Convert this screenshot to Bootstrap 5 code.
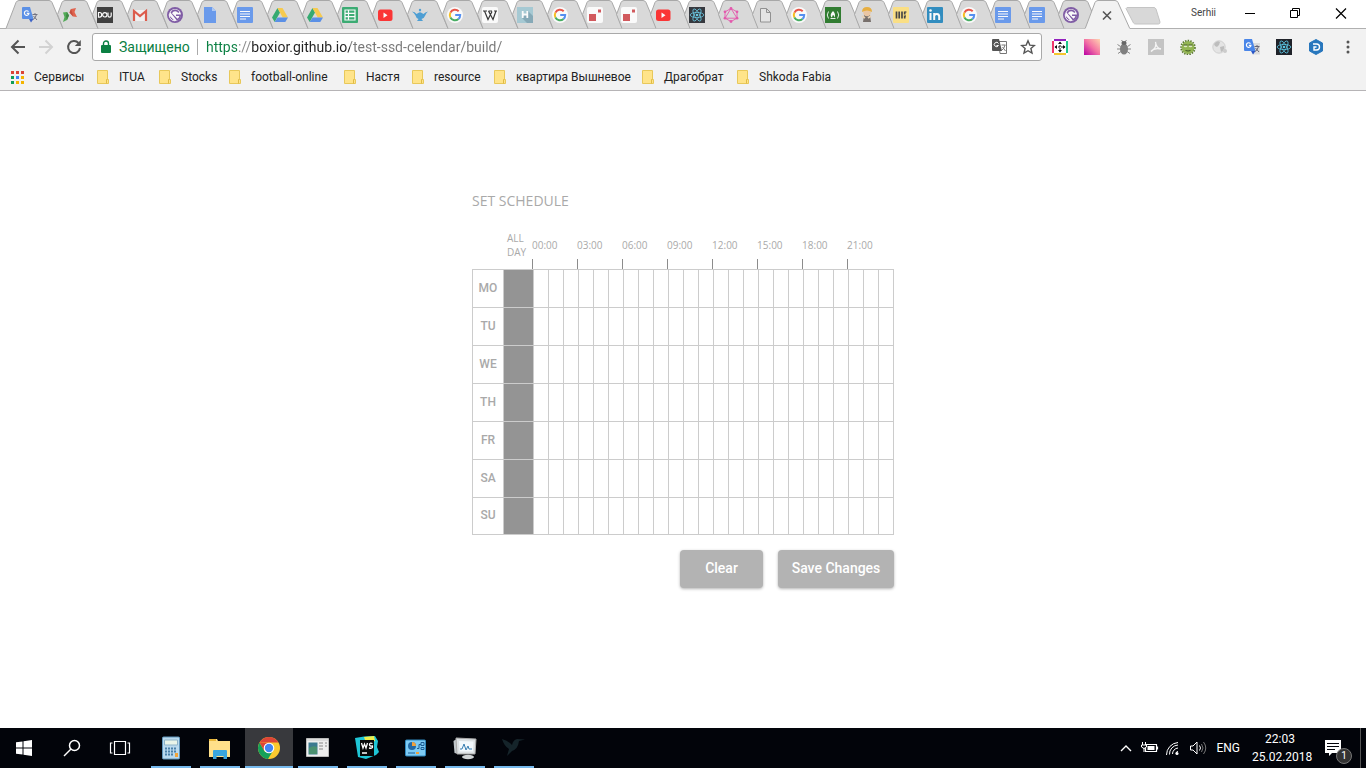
<!DOCTYPE html>
<html lang="ru">
<head>
<meta charset="utf-8">
<meta name="viewport" content="width=device-width, initial-scale=1">
<title>Set schedule</title>
<link href="https://cdn.jsdelivr.net/npm/bootstrap@5.3.0/dist/css/bootstrap.min.css" rel="stylesheet">
<style>
  body { font-family: Roboto, "Noto Sans", sans-serif; font-size: 12px; line-height: 16px; color: #222; background: #fff; }
  a { color: inherit; text-decoration: none; }
  button { border: 0; background: none; padding: 0; color: inherit; }
  svg { display: block; flex: none; }

  /* tab strip */
  .tabstrip { height: 28px; padding-left: 6px; }
  .tabstrip a { width: 35px; height: 28px; flex: none; }
  .tabstrip a.first { width: 46px; }
  .tabstrip a.tight { width: 34px; }
  .tabstrip a.last { width: 32px; }
  .tabstrip svg { overflow: visible; }
  .tabstrip .tabicon { opacity: .88; }
  .profile { font-size: 10px; line-height: 12px; color: #444; }
  .winbtn { width: 46px; height: 26px; }

  /* toolbar */
  .chrome-bar { background: #f2f2f2; border-top: 1px solid #b0b0b0; border-bottom: 1px solid #b6b4b6; height: 63px; }
  .toolrow { height: 35px; padding-left: 4px; }
  .toolbtn { width: 28px; height: 28px; color: #555; }
  .omnibox { height: 28px; border: 1px solid #a9a9a9; border-radius: 3px; background: #fff; padding: 0 5px 0 8px; margin-left: 4px; }
  .secure { font-size: 14px; line-height: 16px; height: 16px; color: #0b8043; width: 79px; border-right: 1px solid #aaa; }
  .address { font-size: 14px; line-height: 20px; border: 0; outline: 0; padding: 0; min-width: 0; color: #777;
    background: linear-gradient(90deg, #0b8043 0 31px, #888 31px 46px, #222 46px 144px, #777 144px) text; -webkit-text-fill-color: transparent; }
  .extbtn { width: 32px; height: 28px; }

  /* bookmarks */
  .marks { display: grid; grid-template-columns: 86px 62px 70px 115px 68px 82px 148px 95px 1fr; height: 26px; padding-left: 11px; align-items: center; color: #222; }
  .marks a { display: flex; align-items: center; gap: 10px; white-space: nowrap; }

  /* schedule */
  .planner { width: 422px; margin: 0 auto; padding: 100px 0 30px; color: #a9a9a9; font-family: "Open Sans", "Noto Sans", sans-serif; }
  .planner h1 { font-size: 14px; line-height: 20px; margin: 0; font-weight: 400; }
  .grid-tbl { width: 422px; table-layout: fixed; border-collapse: separate; border-spacing: 0; margin-top: 20px; }
  .grid-tbl th, .grid-tbl td { padding: 0; }
  .grid-tbl thead th { font-size: 10px; line-height: 14px; font-weight: 400; height: 38px; vertical-align: top; }
  .allday-label { padding-left: 3px; }
  .hour-label { margin-left: -2px; padding-top: 7px; height: 38px; position: relative; }
  .hour-label::after { content: ""; position: absolute; left: 0; bottom: 0; width: 1px; height: 10px; background: #8c8c8c; }
  .grid-tbl tbody tr { height: 38px; }
  .grid-tbl tbody tr:first-child { height: 39px; }
  .grid-tbl tbody tr:last-child { height: 37px; }
  .grid-tbl tbody th, .grid-tbl tbody td { border: 0 solid #ccc; border-right-width: 1px; border-bottom-width: 1px; }
  .grid-tbl tbody tr:first-child > * { border-top-width: 1px; }
  .grid-tbl tbody th { border-left-width: 1px; text-align: center; padding-bottom: 2px; font: 500 12px/16px Roboto, sans-serif; }
  .grid-tbl td.fullday { background: #949494; }
  .actions { gap: 15px; margin-top: 15px; }
  .actbtn { height: 38px; border-radius: 4px; padding-bottom: 2px; background: #b3b3b3; color: #fff; font: 500 14px/20px Roboto, sans-serif; box-shadow: 0 1px 3px rgba(0,0,0,.3); }
  .w-clear { width: 83px; }
  .w-save { width: 116px; }

  /* taskbar */
  .dock { height: 40px; background: #02040a; color: #fff; }
  .dockbtn { width: 48px; height: 40px; }
  .appbtn { width: 40px; height: 40px; margin: 0 4px 0 5px; border-bottom: 2px solid #76b9ed; }
  .appbtn.current { width: 48px; margin: 0 0 0 1px; background: #38393d; }
  .apps { margin-left: 2px; }
  .lang { margin-right: 12px; }
  .clock { line-height: 18px; text-align: center; width: 56px; }
  .bubble { right: 4px; bottom: 4px; width: 16px; height: 16px; border-radius: 50%; background: #333; border: 1px solid #777; font-size: 10px; line-height: 14px; text-align: center; }
  .peek { border-left: 1px solid #555; width: 6px; height: 40px; }
</style>
</head>
<body class="d-flex flex-column min-vh-100">

<svg width="0" height="0" class="position-absolute" aria-hidden="true">
  <symbol id="translate" viewBox="0 0 16 16"><path d="M6 4h10v11.500H9z" fill="#dcdcdc"/><path d="M1 0h7l3.500 12H1q-1 0-1-1V1q0-1 1-1z" fill="#4a86e8"/><path d="M7 12h4.500L9 15.500z" fill="#2a56c6"/><path d="M6.500 4.600A2.300 2.300 0 1 0 7 6.300H4.800" fill="none" stroke="#fff" stroke-width="1.200"/><path d="M10.500 7.500h5M13 6v1.500M14.500 7.500q-1 4-3.500 5M11.500 9l3.500 4" stroke="#667" fill="none"/></symbol>
  <symbol id="xing" viewBox="0 0 16 16"><path d="M1 5.500l4-.5 2 3.500L5 13l-4 2 1.500-5z" fill="#3fa544"/><path d="M5 5l2 3.500L5 13l-1-4z" fill="#2d7c32"/><path d="M9 2l5-1-1.500 4L15 10l-4-.5L7.500 5.500z" fill="#e2533b"/><path d="M9 2l1.500 4.500L11 9.500 7.500 5.500z" fill="#c33d2a"/></symbol>
  <symbol id="dou" viewBox="0 0 16 16"><path d="M0 0h16v16H0z" fill="#2b2b2b"/><path d="M1.500 5.500h1.200q2 0 2 2.300t-2 2.300H1.500zM11 5.500v3q0 1.600 1.600 1.600t1.600-1.600v-3" fill="none" stroke="#fff" stroke-width="1.200"/><circle cx="7.800" cy="7.800" r="2.200" fill="none" stroke="#fff" stroke-width="1.200"/></symbol>
  <symbol id="gmail" viewBox="0 0 16 16"><path d="M1 3h14v11H1z" fill="#f4f4f4"/><path d="M2 14V4l6 5 6-5v10" fill="none" stroke="#dd4b39" stroke-width="2.200"/></symbol>
  <symbol id="gatsby" viewBox="0 0 16 16"><circle cx="8" cy="8" r="8" fill="#744c9e"/><circle cx="8" cy="8" r="6" fill="#fff"/><path d="M3.500 5.500A5 5 0 0 1 12.500 5l-1.200 1A3.600 3.600 0 0 0 5 6.300l5.500 5.500q1.600-1 1.900-2.800H9V7.500h5.100Q14 12.500 10 13.700z" fill="#744c9e"/><path d="M2.100 7.800l6 6.100Q2.600 13.500 2.100 7.800z" fill="#744c9e" stroke="#fff" stroke-width=".8"/></symbol>
  <symbol id="doc" viewBox="0 0 16 16"><path d="M2 0h8l4 4v12H2z" fill="#5b92ee"/><path d="M10 0l4 4h-4z" fill="#a9c6f8"/></symbol>
  <symbol id="gdoc" viewBox="0 0 16 16"><rect width="16" height="16" rx="1" fill="#5b92ee"/><path d="M3 4.500h10M3 7h10M3 9.500h10M3 12h6" stroke="#fff" stroke-width="1.200"/></symbol>
  <symbol id="drive" viewBox="0 0 16 16"><path d="M5.500 1L0 10.500 2.700 15 8 5.500z" fill="#1fa463"/><path d="M5.500 1h5L16 10.500h-5.300z" fill="#fbc93d"/><path d="M5.500 10.500H16L13.300 15H2.700z" fill="#4a86e8"/></symbol>
  <symbol id="sheet" viewBox="0 0 16 16"><rect width="16" height="16" rx="1" fill="#27a566"/><path d="M3 3h10v10H3zM3 6.300h10M3 9.700h10M6.500 3v10" stroke="#fff" fill="none" stroke-width="1.200"/></symbol>
  <symbol id="tube" viewBox="0 0 16 16"><rect x="1" y="2.500" width="14.500" height="11.500" rx="2.500" fill="#ff1f1f"/><path d="M6.500 5.500l4 2.700-4 2.700z" fill="#fff"/></symbol>
  <symbol id="lamp" viewBox="0 0 16 16"><path d="M0 4.500q3 0 4.500 2.500 3.500-2.500 7 0Q13 5 16 4.500q-2 1.500-2.500 3.500-1 3-4 4l1.500 2H5l1.500-2Q4 11 3.500 8.500 2 6 0 4.500z" fill="#3b97d3"/><path d="M6.300 5.500q1.700-1.300 3.400 0z" fill="#3b97d3"/><circle cx="8" cy="3" r="1.200" fill="#3b97d3"/></symbol>
  <symbol id="goog" viewBox="0 0 16 16"><circle cx="8" cy="8" r="8" fill="#fff"/><g fill="none" stroke-width="2"><path d="M11.700 4.300A5.200 5.200 0 0 0 3.400 5.600" stroke="#ea4335"/><path d="M3.400 5.600a5.200 5.200 0 0 0 0 4.900" stroke="#fbbc05"/><path d="M3.400 10.500a5.200 5.200 0 0 0 8.100 1.400" stroke="#34a853"/><path d="M11.500 11.900A5.200 5.200 0 0 0 13.200 8H8.200" stroke="#4285f4"/></g></symbol>
  <symbol id="wiki" viewBox="0 0 16 16"><rect width="16" height="16" rx="2" fill="#fff"/><path d="M1 4h4M6.500 4h3.500M12 4h3M2.500 4l3.500 8.500L10 4.500M6.500 4l4.500 8.500L14 4" stroke="#222" fill="none" stroke-width="1.200"/></symbol>
  <symbol id="hico" viewBox="0 0 16 16"><path d="M0 0h16v16H0z" fill="#9fc7d3"/><path d="M11 4l5 5v7h-6l-5-5z" fill="#7ba3b3"/><path d="M5.700 4v7M10.300 4v7M5.700 7.500h4.600" stroke="#fff" stroke-width="1.800"/></symbol>
  <symbol id="squares" viewBox="0 0 16 16"><rect width="16" height="16" rx="2" fill="#fff"/><path d="M2 7h7v7H2zM11 2.500h3v3h-3z" fill="#d0484c"/></symbol>
  <symbol id="react" viewBox="0 0 16 16"><path d="M0 0h16v16H0z" fill="#20232a"/><g fill="none" stroke="#5bc5e2" stroke-width=".8"><ellipse cx="8" cy="8" rx="6.800" ry="2.600"/><ellipse cx="8" cy="8" rx="6.800" ry="2.600" transform="rotate(60 8 8)"/><ellipse cx="8" cy="8" rx="6.800" ry="2.600" transform="rotate(120 8 8)"/></g><circle cx="8" cy="8" r="1.300" fill="#5bc5e2"/></symbol>
  <symbol id="graphql" viewBox="0 0 16 16"><g fill="none" stroke="#e548a7" stroke-width=".9"><path d="M8 1.500l6 3.300v6.400l-6 3.300-6-3.300V4.800zM8 1.500l6 9.700H2z"/></g><g fill="#e548a7"><circle cx="8" cy="1.500" r="1.400"/><circle cx="14" cy="4.800" r="1.400"/><circle cx="14" cy="11.200" r="1.400"/><circle cx="8" cy="14.500" r="1.400"/><circle cx="2" cy="11.200" r="1.400"/><circle cx="2" cy="4.800" r="1.400"/></g></symbol>
  <symbol id="blank" viewBox="0 0 16 16"><path d="M3.500 1.500h6l4 4v9.500h-10zM9.500 1.500v4h4" fill="#e6e6e6" stroke="#888"/></symbol>
  <symbol id="camp" viewBox="0 0 16 16"><path d="M0 0h16v16H0z" fill="#1a701a"/><path d="M3.500 4.500q-2.500 3.500 0 7M12.500 4.500q2.500 3.500 0 7M5.500 11.500h5" fill="none" stroke="#fff" stroke-width=".9"/><path d="M8 4q3 3 1.500 6.200H9Q9.500 8.500 8 8q-1 1-.8 2.200h-.9Q4.500 7.500 8 4z" fill="#fff"/></symbol>
  <symbol id="worker" viewBox="0 0 16 16"><path d="M5 8h6l1 7H4z" fill="#6b625e"/><circle cx="8" cy="5.500" r="3.700" fill="#edc49c"/><path d="M3 5q0-5 5-5t5 5q-5-3-10 0z" fill="#e9a92d"/><path d="M3 9l3 2M12 9l-3 2" stroke="#ead3b5" stroke-width="2"/></symbol>
  <symbol id="bars" viewBox="0 0 16 16"><rect width="16" height="16" rx="1" fill="#ffe07a"/><path d="M3.500 4.500v7M6.200 4.500v7M9 4.500v7M11.700 4.500v3M11.700 8.500v3" stroke="#333" stroke-width="1.700"/><path d="M12 5h1.500M12 9h1" stroke="#333"/></symbol>
  <symbol id="linked" viewBox="0 0 16 16"><rect width="16" height="16" rx="1" fill="#1c83bc"/><path d="M3.500 6v7M7.200 13V6M7.200 9q.5-2 2.700-2t2.300 2.500V13" stroke="#fff" stroke-width="2" fill="none"/><circle cx="3.500" cy="3.500" r="1.300" fill="#fff"/></symbol>
  <symbol id="folder" viewBox="0 0 12 14"><path d="M.5.500h10v9h1v4H.5z" fill="#ffe48a" stroke="#e8c85a"/><path d="M9.500 13.500v-4h1" fill="none" stroke="#e0bb45"/></symbol>
</svg>

<header>
  <div class="tabstrip d-flex align-items-start">
    <nav class="d-flex" id="tabs" aria-label="Tabs"></nav>
    <a href="#new" aria-label="New tab" class="ms-1"><svg width="35" height="28"><path d="M3 7.500h27q1 0 2 1.500l4 13q0 2-1.500 2H12q-2 0-2.500-1L2 8.500z" fill="#d8d8d8" stroke="#c4c4c4"/></svg></a>
    <div class="d-flex align-items-center ms-auto">
      <span class="profile me-2 pe-1">Serhii</span>
      <button class="winbtn" aria-label="Minimize"><svg width="46" height="26"><path d="M17 13.500h10" stroke="#000"/></svg></button>
      <button class="winbtn" aria-label="Restore"><svg width="46" height="26"><path d="M16.500 10.500h7v7h-7zM18.500 10V8.500h7v7H24" stroke="#000" fill="none"/></svg></button>
      <button class="winbtn" aria-label="Close"><svg width="46" height="26"><path d="M16 8.500l10 10M26 8.500l-10 10" stroke="#000" stroke-width="1.200"/></svg></button>
    </div>
  </div>

  <div class="chrome-bar">
    <div class="toolrow d-flex align-items-center">
      <button class="toolbtn" aria-label="Back"><svg width="28" height="28" fill="none" stroke="currentColor" stroke-width="2"><path d="M21 14H8.500M14.500 7.500L8 14l6.500 6.500"/></svg></button>
      <button class="toolbtn" aria-label="Forward"><svg width="28" height="28" fill="none" stroke="#d2d2d2" stroke-width="2"><path d="M7 14h12.500M13.500 7.500L20 14l-6.500 6.500"/></svg></button>
      <button class="toolbtn" aria-label="Reload"><svg width="28" height="28" fill="none" stroke="currentColor" stroke-width="2"><path d="M18.500 10A6 6 0 1 0 20 15"/><path d="M20.800 7v6h-6z" fill="currentColor" stroke="none"/></svg></button>
      <div class="omnibox d-flex align-items-center flex-grow-1">
        <svg width="10" height="14" class="me-2"><rect y="5" width="10" height="8" rx="1" fill="#0b8043"/><path d="M2.500 6V3.500a2.500 2.500 0 0 1 5 0V6" fill="none" stroke="#0b8043" stroke-width="1.400"/></svg>
        <label class="secure me-2" for="address">Защищено</label>
        <input class="address flex-grow-1" id="address" type="text" value="https://boxior.github.io/test-ssd-celendar/build/">
        <button class="me-2" aria-label="Translate page"><svg width="16" height="16"><path d="M7 2.500h7.500v12H8z" fill="#fff" stroke="#777"/><path d="M1 0h6l3 12H1q-1 0-1-1V1q0-1 1-1z" fill="#555"/><path d="M6.500 4.500A2.200 2.200 0 1 0 6.500 6.500H4.500" fill="none" stroke="#fff"/><path d="M9.500 6h4M13 6q-1 4-3 5M10.500 8l3 4" stroke="#777" fill="none"/></svg></button>
        <button class="ms-1" aria-label="Bookmark this page"><svg width="16" height="16"><path d="M8 1.800l1.800 4.300 4.600.4-3.500 3 1.100 4.600L8 11.700l-4 2.400 1.100-4.600-3.500-3 4.600-.4z" fill="none" stroke="#555" stroke-width="1.400"/></svg></button>
      </div>
      <div class="d-flex ps-1" id="extensions">
        <button class="extbtn" aria-label="Resizer"><svg width="28" height="16" viewBox="-6 0 28 16"><path d="M0 0h16v16H0z" fill="#fff"/><path d="M2 1h12" stroke="#9321bd" stroke-width="2"/><path d="M1 2v12" stroke="#f0386b" stroke-width="2"/><path d="M15 2v12" stroke="#21c68b" stroke-width="2"/><path d="M2 15h12" stroke="#f4c62d" stroke-width="2"/><path d="M8 3v10M3 8h10" fill="none" stroke="#111" stroke-dasharray="2 1"/><path d="M8 2.500l2 2.500H6zM8 13.500L10 11H6zM2.500 8L5 6v4zM13.500 8L11 6v4z" fill="#111"/></svg></button>
        <button class="extbtn" aria-label="Colour picker"><svg width="28" height="16" viewBox="-6 0 28 16"><defs><linearGradient id="pinkfade" x1="0" y1="1" x2="1" y2="0"><stop offset="0" stop-color="#b900a4"/><stop offset=".5" stop-color="#f473a4"/><stop offset="1" stop-color="#ffd5b0"/></linearGradient></defs><path d="M0 0h16v16H0z" fill="url(#pinkfade)"/></svg></button>
        <button class="extbtn" aria-label="Debugger"><svg width="28" height="16" viewBox="-6 0 28 16"><path d="M1.500 5.500l3 2M14.500 5.500l-3 2M1 10h14M2 14.500l3-2M14 14.500l-3-2M5.500 1l1.500 2M10.500 1L9 3" stroke="#888"/><ellipse cx="8" cy="10" rx="4" ry="5.500" fill="#808080"/><ellipse cx="8" cy="4" rx="2.600" ry="2" fill="#666"/></svg></button>
        <button class="extbtn" aria-label="PDF"><svg width="28" height="16" viewBox="-6 0 28 16"><path d="M0 0h16v16H0z" fill="#c4c4c4"/><path d="M7.500 3q2 5-4.500 9.500Q6 8.500 13 10q-5-1-5.500-7z" fill="none" stroke="#f5f5f5" stroke-width="1.300"/></svg></button>
        <button class="extbtn" aria-label="Monster"><svg width="28" height="16" viewBox="-6 0 28 16"><circle cx="8" cy="8.500" r="6.500" fill="#93b552"/><circle cx="8" cy="8.500" r="7" fill="none" stroke="#5b7a30" stroke-width="1.600" stroke-dasharray="1.500 1.200"/><ellipse cx="5.500" cy="7" rx="1.800" ry="1.300" fill="#dfeac2"/><ellipse cx="10.500" cy="7" rx="1.800" ry="1.300" fill="#dfeac2"/><path d="M5.500 11.500q2.500 1 5 0M3.500 6h4M8.500 6h4" stroke="#3f5722" fill="none"/></svg></button>
        <button class="extbtn" aria-label="Globe"><svg width="28" height="16" viewBox="-6 0 28 16"><circle cx="7" cy="8" r="6.200" fill="#e4e4e4" stroke="#d0d0d0"/><path d="M2 5q3-4 6-2l-1 3-2 2-2-1zM8 8l4-1q1 4-3 6z" fill="#bdbdbd"/><circle cx="13" cy="12" r="2" fill="#ccc"/></svg></button>
        <button class="extbtn" aria-label="Translate"><svg width="28" height="16" viewBox="-6 0 28 16"><use href="#translate" width="16" height="16"/></svg></button>
        <button class="extbtn" aria-label="React tools"><svg width="28" height="16" viewBox="-6 0 28 16"><use href="#react" width="16" height="16"/></svg></button>
        <button class="extbtn" aria-label="Downloader"><svg width="28" height="16" viewBox="-6 0 28 16"><path d="M8 .5l6.500 3.500v8L8 15.500 1.500 12V4z" fill="#2877bd" stroke="#2877bd" stroke-linejoin="round"/><path d="M5 5h3.500q3 0 3 3t-3 3H6V8h2.500" fill="none" stroke="#fff" stroke-width="1.400"/></svg></button>
        <button class="extbtn" aria-label="Menu"><svg width="28" height="16" viewBox="-6 0 28 16" fill="#555"><circle cx="8" cy="3" r="1.500"/><circle cx="8" cy="8" r="1.500"/><circle cx="8" cy="13" r="1.500"/></svg></button>
      </div>
    </div>
    <nav class="marks" aria-label="Bookmarks">
      <a href="#apps"><svg width="13" height="13"><path d="M0 0h3v3H0zM5 0h3v3H5zM10 0h3v3h-3z" fill="#db4437"/><path d="M0 5h3v3H0zM0 10h3v3H0z" fill="#0f9d58"/><path d="M5 5h3v3H5z" fill="#4285f4"/><path d="M10 5h3v3h-3zM5 10h3v3H5zM10 10h3v3h-3z" fill="#f4b400"/></svg>Сервисы</a>
      <a href="#1"><svg width="12" height="14"><use href="#folder"/></svg>ITUA</a>
      <a href="#2"><svg width="12" height="14"><use href="#folder"/></svg>Stocks</a>
      <a href="#3"><svg width="12" height="14"><use href="#folder"/></svg>football-online</a>
      <a href="#4"><svg width="12" height="14"><use href="#folder"/></svg>Настя</a>
      <a href="#5"><svg width="12" height="14"><use href="#folder"/></svg>resource</a>
      <a href="#6"><svg width="12" height="14"><use href="#folder"/></svg>квартира Вышневое</a>
      <a href="#7"><svg width="12" height="14"><use href="#folder"/></svg>Драгобрат</a>
      <a href="#8"><svg width="12" height="14"><use href="#folder"/></svg>Shkoda Fabia</a>
    </nav>
  </div>
</header>

<main class="flex-grow-1">
  <section class="planner">
    <h1>SET SCHEDULE</h1>
    <table class="grid-tbl">
      <colgroup id="cols"></colgroup>
      <thead><tr id="hours"></tr></thead>
      <tbody id="days"></tbody>
    </table>
    <div class="d-flex justify-content-end actions">
      <button class="actbtn w-clear" type="button">Clear</button>
      <button class="actbtn w-save" type="button">Save Changes</button>
    </div>
  </section>
</main>

<footer class="dock d-flex">
  <button class="dockbtn" aria-label="Start"><svg width="48" height="40" fill="#fff"><path d="M16 14.300l6.500-.9v6.100H16zM23.500 13.200L32 12v7.500h-8.500zM16 20.500h6.500v6.100l-6.500-.9zM23.500 20.500H32V28l-8.500-1.200z"/></svg></button>
  <button class="dockbtn" aria-label="Search"><svg width="48" height="40" fill="none" stroke="#fff" stroke-width="1.500"><circle cx="26.500" cy="17.500" r="5"/><path d="M23 21l-7 7"/></svg></button>
  <button class="dockbtn" aria-label="Task view"><svg width="48" height="40" fill="none" stroke="#fff" stroke-width="1.200"><path d="M18.500 13.500h11v13h-11zM16.500 15h-2v10h2M31.500 15h2v10h-2"/></svg></button>
  <div class="d-flex apps">
    <button class="appbtn" aria-label="Calculator"><svg width="40" height="38"><rect x="11.500" y="9" width="17" height="22" rx="1" fill="#b9d9ee" stroke="#5f95ba"/><path d="M13.500 12h13v5h-13z" fill="#e9f4e9" stroke="#8fb4c8"/><path d="M14 20.500h12M14 23.500h12M14 26.500h9" stroke="#4a80a8" stroke-width="1.800" stroke-dasharray="2 1"/><path d="M24 25h3v4h-3z" fill="#f0a43a"/></svg></button>
    <button class="appbtn" aria-label="Explorer"><svg width="40" height="38"><path d="M9 11h8l1 2h12v16H9z" fill="#ffe08a"/><path d="M9 11h7v2H9z" fill="#e9b73a"/><path d="M13 31v-8q0-1 1-1h12q1 0 1 1v8h-3.500v-3h-7v3z" fill="#3aa5de"/></svg></button>
    <button class="appbtn current" aria-label="Chrome"><svg width="48" height="38"><circle cx="24" cy="20" r="11" fill="#fbc92f"/><path d="M14.500 14.500A11 11 0 0 1 33.500 14.500H24z" fill="#dc4437"/><path d="M14.500 14.500A11 11 0 0 0 23 31l5.500-9-8.500 2z" fill="#14a05a"/><path d="M14.500 14.500L19 22.500 24 15z" fill="#dc4437"/><circle cx="24" cy="20" r="5.300" fill="#fff"/><circle cx="24" cy="20" r="4.200" fill="#4285f4"/></svg></button>
    <button class="appbtn" aria-label="Window"><svg width="40" height="38"><path d="M8.500 10.500h22v18h-22z" fill="#eee" stroke="#bbb"/><path d="M10.500 14.500h9v12h-9z" fill="#3c7a90"/><path d="M11 20q4-3 8-1v7h-8z" fill="#4a9070"/><path d="M21 15h4M21 18h4M21 21h4M27 15h2M27 18h2" stroke="#888"/><path d="M9 12h21" stroke="#ccc"/></svg></button>
    <button class="appbtn" aria-label="WebStorm"><svg width="40" height="38"><path d="M8 10l9-1.500L28 8l3 5-1 6 2 5-3 3-10 4-8-2z" fill="#1fc6d6"/><path d="M17 9l10-1 1 5-9 2z" fill="#f0ee4b"/><path d="M13 12h14v16H13z" fill="#080808"/><path d="M14.500 15l1.500 5 1.500-4 1.500 4 1.500-5M25.500 15.500q-3-1-3 1t3 1.500q.500 3-3.500 2M15 25h5" stroke="#fff" fill="none" stroke-width="1.300"/></svg></button>
    <button class="appbtn" aria-label="Control panel"><svg width="40" height="38"><rect x="9.500" y="12" width="20" height="16" rx="1" fill="#7ecbf4" stroke="#2f88be"/><circle cx="16" cy="18" r="4" fill="#2369a5"/><path d="M16 18v-4a4 4 0 0 1 4 4z" fill="#f0a13c"/><path d="M21 20.500h2v-4h2M25 14.500h3v3h-3zM25 19.500h3v2h-3zM12 25h7" stroke="#1c5c95" fill="none"/><path d="M20 25h3" stroke="#f0a13c" stroke-width="2"/></svg></button>
    <button class="appbtn" aria-label="Monitor"><svg width="40" height="38"><path d="M8.500 13l3-2h2v15l-4-1z" fill="#c0c6ca"/><path d="M11 10l20 1-1 15H12z" fill="#dce1e4" stroke="#aaa"/><path d="M14 13l14.500.5-.5 10H14.500z" fill="#f2f8fc"/><path d="M15 21h2l2-5 2 6 2-4 1 3h3" stroke="#377eb2" fill="none"/><ellipse cx="23" cy="29" rx="6" ry="2.200" fill="#d0d4d6"/></svg></button>
    <button class="appbtn" aria-label="Hummingbird"><svg width="40" height="38"><path d="M8 11q7 2 10 6 1-5 5-6l8 .5-6 1.500q-1 8-7 10l-5 5 2-7q-5-3-7-10z" fill="#15242a"/></svg></button>
  </div>
  <div class="ms-auto d-flex align-items-center">
    <button aria-label="Hidden icons" class="me-1"><svg width="20" height="40" fill="none" stroke="#fff" stroke-width="1.400"><path d="M5 23l5-5 5 5"/></svg></button>
    <svg width="20" height="40" class="me-1"><path d="M5.500 16.500h11v7h-11zM17.500 18.500v3" fill="none" stroke="#fff" stroke-width="1.200"/><path d="M7.500 18h7v4h-7z" fill="#fff"/><path d="M2.500 14v3M5.500 14v3M1.500 17h5v2q-2.500 3-5 0zM4 20v4" stroke="#fff" fill="#02040a"/></svg>
    <svg width="20" height="40" fill="none" stroke="#fff" class="me-1"><path d="M12 25.500a2 2 0 0 1 2-2M8.500 26a6 6 0 0 1 5.500-6M5.500 26.500A9 9 0 0 1 14 17M2.500 27A12.500 12.500 0 0 1 14 14.500"/><circle cx="13" cy="25.500" r="1.500" fill="#fff" stroke="none"/></svg>
    <svg width="20" height="40" fill="none" stroke="#fff" class="me-2"><path d="M2.500 18h2.500l4-4v12l-4-4H2.500zM11.500 17.500q2 2.500 0 5"/><path d="M13.500 16q3 4 0 8M15.500 14q4.500 6 0 12" stroke="#777"/></svg>
    <span class="lang">ENG</span>
    <div class="clock">22:03<br>25.02.2018</div>
    <button class="dockbtn position-relative" aria-label="Notifications"><svg width="48" height="40"><path d="M17 12h16v13h-9l-3 3v-3h-4z" fill="#fff"/><path d="M19 15.500h12M19 18.500h12M19 21.500h8" stroke="#02040a"/></svg><span class="bubble position-absolute">1</span></button>
    <div class="peek ms-1"></div>
  </div>
</footer>

<script src="https://cdn.jsdelivr.net/npm/bootstrap@5.3.0/dist/js/bootstrap.bundle.min.js"></script>
<script>
  const icons = ['translate','xing','dou','gmail','gatsby','doc','gdoc','drive','drive','sheet','tube','lamp','goog','wiki','hico','goog','squares','squares','tube','react','graphql','blank','goog','camp','worker','bars','linked','goog','gdoc','gdoc','gatsby'];
  const shape = 'M11 28.500L5.500 14.500L10 2.500Q11 .5 13 .5H32Q34 .5 35 2.500L46 28.500';
  const wide = 'M0 28.500L10 2.500Q11 .5 13 .5H43Q45 .5 46 2.500L57 28.500';
  const active = 'M0 29L10 2.500Q11 .5 13 .5H30Q32 .5 33 2.500L45 29';
  document.getElementById('tabs').innerHTML = icons.map((name, i) => {
    const kind = i === 0 ? 'first' : i === icons.length - 1 ? 'last' : i > 15 ? 'tight' : '';
    return `<a href="#tab${i}" class="${kind}" aria-label="${name}"><svg width="46" height="28"><path d="${i ? shape : wide}" fill="#d9d9d9" stroke="#a8a8a8"/><use class="tabicon" href="#${name}" x="${i ? 10 : 16}" y="7" width="16" height="16"/></svg></a>`;
  }).join('') +
  `<a href="#current" aria-label="Current tab"><svg width="46" height="28"><path d="${active}" fill="#f2f2f2" stroke="#a8a8a8"/><path d="M0 28.500h45V30H0z" fill="#f2f2f2"/><path d="M18 11.500l8 8M26 11.500l-8 8" stroke="#555" stroke-width="1.600"/></svg></a>`;

  const range = n => [...Array(n).keys()];
  document.getElementById('cols').innerHTML = '<col width="32"><col width="30">' + '<col width="15">'.repeat(24);
  document.getElementById('hours').innerHTML = '<td></td><th scope="col"><div class="allday-label">ALL<br>DAY</div></th>' +
    range(8).map(h => `<th scope="colgroup" colspan="3"><div class="hour-label">${String(h * 3).padStart(2, '0')}:00</div></th>`).join('');
  document.getElementById('days').innerHTML = ['MO','TU','WE','TH','FR','SA','SU'].map(d =>
    `<tr><th scope="row">${d}</th><td class="fullday"></td>${'<td></td>'.repeat(24)}</tr>`).join('');
</script>
</body>
</html>
